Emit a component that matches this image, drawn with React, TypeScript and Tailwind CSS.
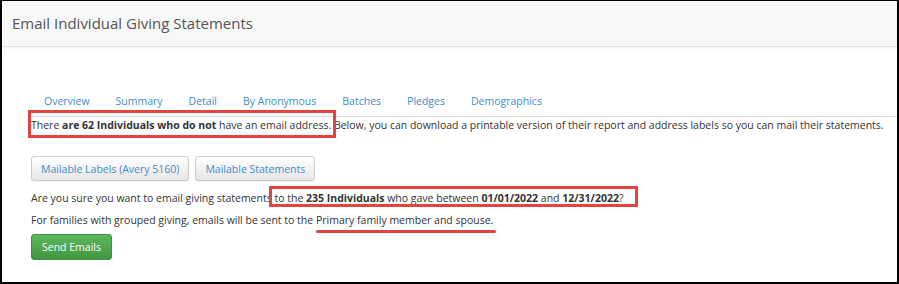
import React from 'react';

const tabs = ['Overview', 'Summary', 'Detail', 'By Anonymous', 'Batches', 'Pledges', 'Demographics'];

function App() {
  return (
    <div
      className="relative w-[899px] h-[284px] overflow-hidden bg-white border-black border-t border-l-2 border-r-2 border-b-2 text-[#333]"
      style={{ fontFamily: '"Open Sans", "Liberation Sans", sans-serif' }}
    >
      <header className="h-[46px] bg-[#f7f7f7] border-b border-[#e2e2e2] shadow-[0_1px_2px_rgba(0,0,0,0.06)] flex items-center px-[10px]">
        <h1 className="text-[15px] text-[#555] leading-none mb-[1px]">Email Individual Giving Statements</h1>
      </header>

      <main className="pl-[29px] pt-[36px] text-[10.5px] leading-[16px]">
        <ul className="flex border-b border-[#ddd]">
          {tabs.map((t) => (
            <li key={t}>
              <a className="block px-[13px] pt-[10px] pb-[7px] text-[#428bca]" href="#">
                {t}
              </a>
            </li>
          ))}
        </ul>

        <p className="whitespace-nowrap">
          There <b>are 62 Individuals who do not</b> have an email address. Below, you can download a printable version of
          their report and address labels so you can mail their statements.
        </p>

        <div className="flex gap-[6px] mt-[23px]">
          <button className="h-[25px] px-[9px] rounded-[3px] border border-[#ccc] bg-gradient-to-b from-white to-[#e6e6e6] text-[#428bca] shadow-[0_1px_1px_rgba(0,0,0,0.06)]">
            Mailable Labels (Avery 5160)
          </button>
          <button className="h-[25px] px-[9px] rounded-[3px] border border-[#ccc] bg-gradient-to-b from-white to-[#e6e6e6] text-[#428bca] shadow-[0_1px_1px_rgba(0,0,0,0.06)]">
            Mailable Statements
          </button>
        </div>

        <p className="mt-[9px] whitespace-nowrap">
          Are you sure you want to email giving statements to the <b>235 Individuals</b> who gave between{' '}
          <b>01/01/2022</b> and <b>12/31/2022</b>?
        </p>
        <p className="mt-[6px] whitespace-nowrap">
          For families with grouped giving, emails will be sent to the Primary family member and spouse.
        </p>

        <button className="mt-[6px] h-[26px] px-[10px] rounded-[3px] border border-[#3e8f3e] bg-gradient-to-b from-[#5cb85c] to-[#419641] text-white">
          Send Emails
        </button>
      </main>

      {/* annotations */}
      <div className="absolute left-[26px] top-[109px] w-[308px] h-[28px] border-[3px] border-[#e5443d]" />
      <div className="absolute left-[267px] top-[185px] w-[369px] h-[21px] border-[3px] border-[#e5443d]" />
      <div className="absolute left-[314px] top-[229px] w-[180px] h-[3px] bg-[#e5443d] rounded-full" />
    </div>
  );
}

export default App;
